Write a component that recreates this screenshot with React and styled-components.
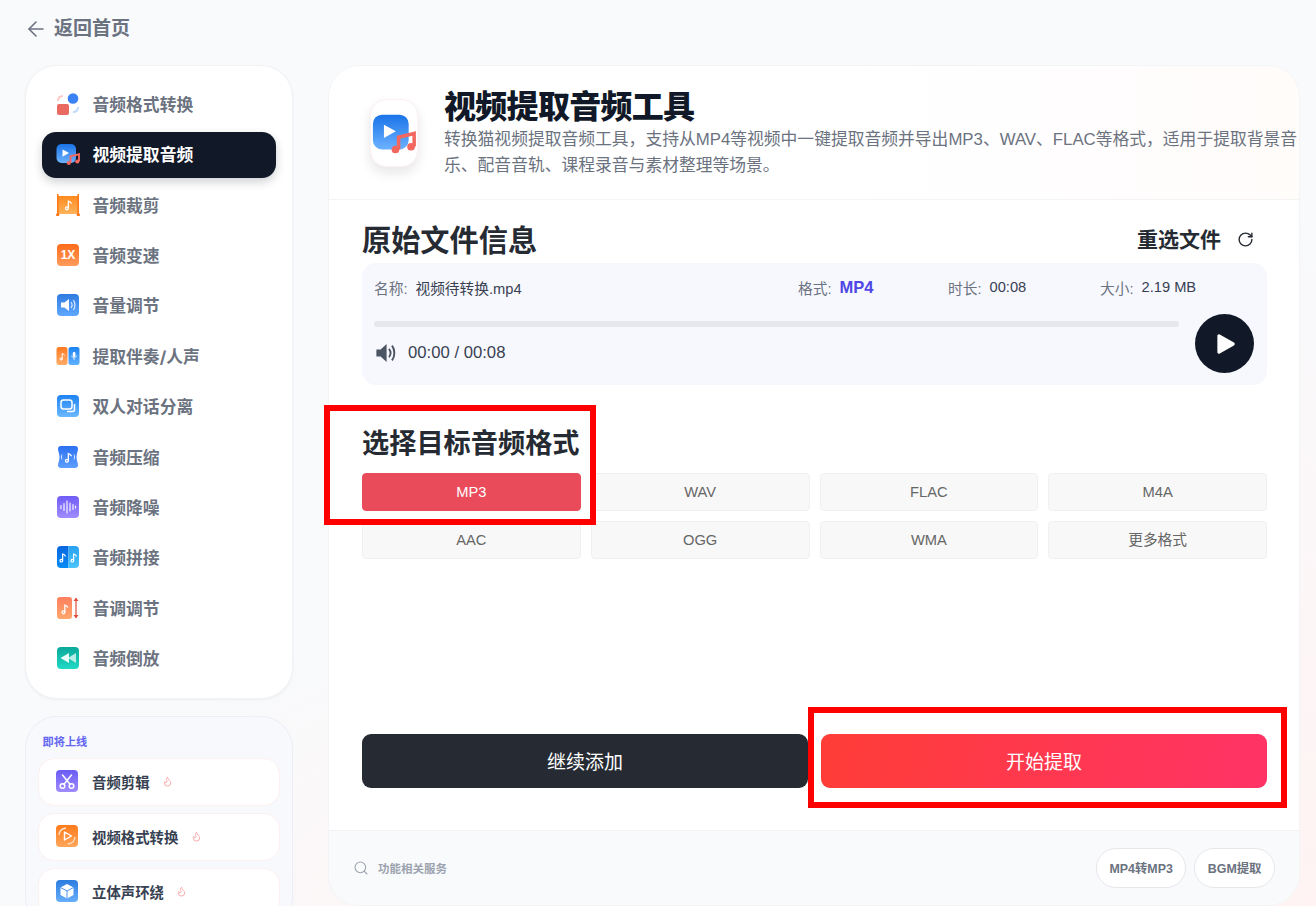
import React from 'react';
import styled, { createGlobalStyle } from 'styled-components';
import { ArrowLeft, RotateCw, Search, Flame } from 'lucide-react';

const Global = createGlobalStyle`
  html, body { margin: 0; padding: 0; height: 906px; overflow: hidden; }
  body { font-family: "Liberation Sans", "Noto Sans CJK SC", sans-serif; background: #f8fafc; }
  * { box-sizing: border-box; }
`;

const Page = styled.div`
  position: relative;
  height: 906px;
  overflow: hidden;
  background:
    radial-gradient(circle at 100% 100%, #fff3f3 0, rgba(255,243,243,0) 45%),
    radial-gradient(circle at 30% 100%, #fdf6f6 0, rgba(253,246,246,0) 22%),
    #f8fafc;
`;
const BackRow = styled.div`
  height: 65px;
  padding: 0 0 8px 24px;
  display: flex;
  align-items: center;
  gap: 6px;
  color: #6b7280;
  font: 700 19px/24px "Inter", "Noto Sans CJK SC", sans-serif;
`;
const Shell = styled.div`
  display: flex;
  align-items: flex-start;
  gap: 35px;
  padding-left: 25px;
`;
const SideColumn = styled.aside`
  width: 268px;
  flex: none;
  display: flex;
  flex-direction: column;
  gap: 17px;
`;
const NavCard = styled.nav`
  background: #fff;
  border: 1px solid #f1f3f6;
  border-radius: 32px;
  padding: 16px;
  display: flex;
  flex-direction: column;
  gap: 4.36px;
  box-shadow: 0 1px 3px rgba(15, 23, 42, .05);
`;
const NavItem = styled.div`
  height: 46px;
  display: flex;
  align-items: center;
  gap: 12.5px;
  padding: 0 0 2px 14px;
  border-radius: 14px;
  font: 700 16.8px "Inter", "Noto Sans CJK SC", sans-serif;
  color: ${p => (p.$active ? '#fff' : '#6b7280')};
  background: ${p => (p.$active ? '#111827' : 'transparent')};
  box-shadow: ${p => (p.$active ? '0 4px 10px rgba(17,24,39,.2)' : 'none')};
  & > svg { flex: none; }
`;
const SoonCard = styled.section`
  background: #f8f9fd;
  border: 1px solid #eceef6;
  border-radius: 32px;
  padding: 17px 12px 12px;
  display: flex;
  flex-direction: column;
  gap: 7.5px;
`;
const SoonLabel = styled.div`
  font: 700 11.2px/16px "Inter", "Noto Sans CJK SC", sans-serif;
  color: #6366f1;
  padding-left: 4.5px;
  margin-bottom: 1px;
`;
const SoonItem = styled.div`
  height: 47.5px;
  background: #fff;
  border: 1px solid #fdf0f0;
  border-radius: 16px;
  display: flex;
  align-items: center;
  padding: 0 0 1.5px 16px;
  font: 600 14.4px "Inter", "Noto Sans CJK SC", sans-serif;
  color: #374151;
  & > svg:first-child { flex: none; margin-right: 13px; }
`;
const Hot = styled.span`
  display: inline-flex;
  margin-left: 12.5px;
  color: #fca5a5;
`;
const Main = styled.main`
  width: 972px;
  height: 841px;
  flex: none;
  background: #fff;
  border: 1px solid #f3f4f6;
  border-radius: 32px;
  overflow: hidden;
  display: flex;
  flex-direction: column;
`;
const Header = styled.header`
  height: 134px;
  flex: none;
  display: flex;
  align-items: center;
  gap: 26px;
  padding-left: 41px;
  border-bottom: 1px solid #f3f4f6;
  background: linear-gradient(90deg, #fff 55%, #fffdfd 80%, #fffcfa 100%);
`;
const AppTile = styled.div`
  width: 48px;
  height: 68px;
  flex: none;
  background: #fff;
  border: 1px solid #fdf0f0;
  border-radius: 16px;
  box-shadow: 0 6px 12px rgba(17, 24, 39, .1);
  display: flex;
  align-items: center;
  justify-content: center;
`;
const HeaderText = styled.div`
  flex: 1;
  min-width: 0;
`;
const Title = styled.h1`
  margin: 1px 0 0;
  font: 800 32px/40px "Inter", "Noto Sans CJK SC", sans-serif;
  letter-spacing: -.7px;
  color: #111827;
`;
const Desc = styled.p`
  margin: 0;
  font-size: 16.8px;
  line-height: 26px;
  color: #6b7280;
`;
const Body = styled.div`
  flex: 1;
  padding: 18px 32px 0 33px;
  display: flex;
  flex-direction: column;
`;
const SectionHead = styled.div`
  height: 45px;
  padding: 0 13px 6px 0;
  display: flex;
  align-items: center;
  justify-content: space-between;
`;
const H2 = styled.h2`
  margin: 0;
  font-weight: 700;
  font-size: ${p => p.$size}px;
  color: #262b33;
`;
const Reselect = styled.div`
  display: flex;
  align-items: center;
  gap: 16px;
  font-size: 21px;
  font-weight: 700;
  color: #262b33;
`;
const ReselectIcon = styled(RotateCw)`
  margin-top: 4px;
  color: #262b33;
`;
const FilePanel = styled.div`
  height: 122px;
  background: #f7f8fe;
  border-radius: 14px;
  padding: 11px 13px 0 12px;
  position: relative;
`;
const Meta = styled.div`
  display: grid;
  grid-template-columns: 424px 150px 152px 1fr;
  height: 26px;
  align-items: center;
  font-size: 14.7px;
  color: #374151;
`;
const MetaCell = styled.div`
  display: flex;
  align-items: center;
  gap: 8px;
`;
const MetaKey = styled.span`
  color: #6b7280;
`;
const FormatValue = styled.span`
  color: #4f46e5;
  font-weight: 700;
  font-size: 16.5px;
`;
const Track = styled.div`
  width: 805px;
  height: 6px;
  margin-top: 21px;
  background: #e5e7eb;
  border-radius: 3px;
`;
const TimeRow = styled.div`
  display: flex;
  align-items: center;
  gap: 10px;
  margin-top: 14px;
  height: 24px;
  font-size: 16.7px;
  color: #374151;
`;
const PlayButton = styled.div`
  position: absolute;
  right: 13px;
  top: 51px;
  width: 59px;
  height: 59px;
  border-radius: 50%;
  background: #111827;
  display: flex;
  align-items: center;
  justify-content: center;
`;
const FormatHead = styled.div`
  margin-top: 38px;
  height: 36px;
  display: flex;
  align-items: center;
`;
const FormatGrid = styled.div`
  margin-top: 14px;
  display: grid;
  grid-template-columns: repeat(4, 1fr);
  gap: 10px;
`;
const FormatOption = styled.div`
  height: 38px;
  display: flex;
  align-items: center;
  justify-content: center;
  border-radius: 4px;
  font-size: 14.7px;
  line-height: 1;
  border: 1px solid ${p => (p.$on ? '#e94b5b' : '#f0f0f0')};
  background: ${p => (p.$on ? '#e94b5b' : '#f8f8f8')};
  color: ${p => (p.$on ? '#fff' : '#666')};
`;
const Actions = styled.div`
  margin-top: auto;
  margin-bottom: 42px;
  display: flex;
  justify-content: space-between;
`;
const ActionButton = styled.div`
  width: 446px;
  height: 54px;
  padding-bottom: 1px;
  border-radius: 9px;
  display: flex;
  align-items: center;
  justify-content: center;
  color: #fff;
  font-size: 19px;
  background: ${p => (p.$primary ? 'linear-gradient(100deg, #ff3d37, #ff3366)' : '#262b33')};
`;
const Footer = styled.footer`
  height: 75px;
  flex: none;
  display: flex;
  align-items: center;
  justify-content: space-between;
  padding: 0 24px;
  background: #f8fafc;
  border-top: 1px solid #f0f2f5;
`;
const FooterLabel = styled.div`
  display: flex;
  align-items: center;
  gap: 9px;
  color: #9ca3af;
  font-size: 11.5px;
  font-weight: 700;
`;
const Pills = styled.div`
  display: flex;
  gap: 8px;
`;
const Pill = styled.div`
  height: 40px;
  padding: 0 12.5px;
  display: flex;
  align-items: center;
  background: #fff;
  border: 1px solid #e5e7eb;
  border-radius: 20px;
  color: #6b7280;
  font-size: 12.4px;
  font-weight: 700;
`;
const Annotation = styled.div`
  position: absolute;
  border: 6px solid #ff0000;
  left: ${p => p.$x}px;
  top: ${p => p.$y}px;
  width: ${p => p.$w}px;
  height: ${p => p.$h}px;
`;

const note = (x, y, s = 1) => (
  <g transform={`translate(${x} ${y}) scale(${s})`} fill="none" stroke="#fff" strokeWidth="1" strokeLinecap="round">
    <path d="M2.200 5.500V0.400c1 .2 1.800.8 2.200 1.700" />
    <circle cx="1.100" cy="6" r="1.100" />
  </g>
);

const G = ({ id, a, b }) => (
  <linearGradient id={id} x1="0" y1="0" x2="0" y2="1">
    <stop offset="0" stopColor={a} />
    <stop offset="1" stopColor={b} />
  </linearGradient>
);

const Ico = ({ children }) => (
  <svg width="24" height="24" viewBox="0 0 24 24">{children}</svg>
);

const Tile = ({ id, a, b, children }) => (
  <Ico>
    <defs><G id={id} a={a} b={b} /></defs>
    <rect x="1" y="1" width="22" height="22" rx="4" fill={`url(#${id})`} />
    {children}
  </Ico>
);

const ExtractGlyph = ({ uid }) => (
  <>
    <defs><G id={uid} a="#1a73e8" b="#6cb2ff" /></defs>
    <rect x="0.500" y="2" width="19.500" height="19" rx="5" fill={`url(#${uid})`} />
    <path d="M6.500 7.500l6.500 3.600-6.500 3.600z" fill="#fff" />
    <path d="M14.500 21V14.300l8.500-2v7" fill="none" stroke="#f4675f" strokeWidth="1.900" />
    <circle cx="12.800" cy="21" r="2.100" fill="#f4675f" />
    <circle cx="21.300" cy="19.500" r="2.100" fill="#f4675f" />
  </>
);

const icons = {
  convert: (
    <Ico>
      <path d="M2 9c0-3 2-5 5-5" fill="none" stroke="#fcc9c5" strokeWidth="2" />
      <path d="M22 15c0 3-2 5-5 5" fill="none" stroke="#bfd9ff" strokeWidth="2" />
      <circle cx="17" cy="6.500" r="5.300" fill="#3b82f6" />
      <rect x="1" y="12" width="12" height="11" rx="2" fill="#ea6a62" />
    </Ico>
  ),
  extract: <Ico><ExtractGlyph uid="gx1" /></Ico>,
  trim: (
    <Ico>
      <defs><G id="gt" a="#ff8a1f" b="#ffb35c" /></defs>
      <rect x="2" y="3" width="20" height="18" fill="url(#gt)" />
      <rect x="1" y="1" width="1.600" height="22" fill="#ff7a14" />
      <rect x="21.400" y="1" width="1.600" height="22" fill="#ff7a14" />
      <rect x="0" y="20.500" width="3.400" height="2.600" rx="1" fill="#ff7a14" />
      <rect x="20.600" y="20.500" width="3.400" height="2.600" rx="1" fill="#ff7a14" />
      {note(9.500, 7.500, 1.300)}
    </Ico>
  ),
  speed: (
    <Tile id="gs" a="#ff6a1a" b="#ff9d5c">
      <text x="12" y="16.300" textAnchor="middle" fontSize="12" fontWeight="700" fontFamily="Liberation Sans" fill="#fff">1X</text>
    </Tile>
  ),
  volume: (
    <Tile id="gv" a="#2f7be0" b="#60a8ff">
      <path d="M5 9.500h3.400L13 6v12l-4.600-3.500H5z" fill="#fff" />
      <path d="M15 9c1.200 1.600 1.200 4.400 0 6M17.400 7c2 2.800 2 7.200 0 10" fill="none" stroke="#dbeafe" strokeWidth="1.200" />
    </Tile>
  ),
  vocal: (
    <Ico>
      <defs><G id="gl1" a="#ff7a1f" b="#ffac6b" /><G id="gl2" a="#1a84f0" b="#60b0ff" /></defs>
      <rect x="0.500" y="3" width="11" height="18" rx="2.500" fill="url(#gl1)" />
      <rect x="12.500" y="3" width="11" height="18" rx="2.500" fill="url(#gl2)" />
      {note(4, 9, 1)}
      <rect x="16.800" y="8" width="2.600" height="5" rx="1.300" fill="#fff" />
      <path d="M15.800 11.500c0 3 4.600 3 4.600 0M18 14v2" fill="none" stroke="#fff" strokeWidth=".8" />
    </Ico>
  ),
  dialog: (
    <Tile id="gd" a="#1f83f2" b="#6bb8ff">
      <rect x="5" y="6" width="11" height="9" rx="2.500" fill="none" stroke="#fff" strokeWidth="1.500" />
      <path d="M18.500 10v5.500a2 2 0 0 1-2 2h-5.500" fill="none" stroke="#fff" strokeWidth="1.500" />
    </Tile>
  ),
  compress: (
    <Ico>
      <defs><G id="gc" a="#2a6ff0" b="#5fa0ff" /></defs>
      <path d="M5 1h14c2 0 3 1 3 3 0 2-1.500 5-1.500 8s1.500 6 1.500 8c0 2-1 3-3 3H5c-2 0-3-1-3-3 0-2 1.500-5 1.500-8S2 6 2 4c0-2 1-3 3-3z" fill="url(#gc)" />
      {note(9.500, 8, 1.300)}
      <path d="M6 9.500c-.8 1.500-.8 3.500 0 5M18 9.500c.8 1.500.8 3.500 0 5" fill="none" stroke="#dbeafe" strokeWidth="1" />
    </Ico>
  ),
  denoise: (
    <Tile id="gn" a="#6f5cf6" b="#a08cff">
      <path d="M5 10.500v3M8 8.500v7M11 6v12M14 8v8M17 9.500v5M19.500 11v2" stroke="#fff" strokeWidth="1.200" strokeLinecap="round" fill="none" opacity=".9" />
    </Tile>
  ),
  join: (
    <Ico>
      <defs><G id="gj1" a="#0a66e0" b="#0a8cf5" /><G id="gj2" a="#28a0f0" b="#4cc4fa" /></defs>
      <path d="M5 1h7.500v22H5a4 4 0 0 1-4-4V5a4 4 0 0 1 4-4z" fill="url(#gj1)" />
      <path d="M12.500 1H19a4 4 0 0 1 4 4v14a4 4 0 0 1-4 4h-6.500z" fill="url(#gj2)" />
      {note(4, 8.500, 1.200)}
      {note(15, 8.500, 1.200)}
    </Ico>
  ),
  pitch: (
    <Ico>
      <defs><G id="gp" a="#ff7f5f" b="#ffa76b" /></defs>
      <rect x="1" y="1" width="15" height="22" rx="3" fill="url(#gp)" />
      {note(6, 8.500, 1.300)}
      <path d="M20 2.500v19" stroke="#d9503f" strokeWidth="1.200" />
      <path d="M17.500 5L20 1.500 22.500 5zM17.500 19l2.500 3.500 2.500-3.500z" fill="#d9503f" />
    </Ico>
  ),
  reverse: (
    <Tile id="gr" a="#0aa89a" b="#20d9c4">
      <path d="M13 7v10L4.500 12z" fill="#e8fdf9" />
      <path d="M20 7v10l-8-5z" fill="#fff" opacity=".7" />
    </Tile>
  ),
  scissors: (
    <Tile id="gcut" a="#6a5cf5" b="#a08cff">
      <g fill="none" stroke="#fff" strokeWidth="1.500" strokeLinecap="round">
        <circle cx="7.500" cy="17" r="2.300" />
        <circle cx="16.500" cy="17" r="2.300" />
        <path d="M9 15.300L16.500 6M15 15.300L7.500 6" />
      </g>
    </Tile>
  ),
  videoConv: (
    <Tile id="gvc" a="#ff7a1a" b="#ffa75c">
      <path d="M9.500 8l7 4-7 4z" fill="none" stroke="#fff" strokeWidth="1.400" strokeLinejoin="round" />
      <path d="M4 11c.3-3.500 3-6.500 7-7M20 13c-.3 3.500-3 6.500-7 7" fill="none" stroke="#ffe2c9" strokeWidth="1.300" />
    </Tile>
  ),
  cube: (
    <Tile id="gcube" a="#2b7cdf" b="#68aefc">
      <path d="M12 5l6.500 3.500v7.500L12 19.500 5.500 16V8.500z" fill="#fff" />
      <path d="M5.500 8.500L12 12l6.500-3.500M12 12v7.500" fill="none" stroke="#4e95ee" strokeWidth="1" />
    </Tile>
  ),
};

const navItems = [
  ['convert', '音频格式转换'],
  ['extract', '视频提取音频', true],
  ['trim', '音频裁剪'],
  ['speed', '音频变速'],
  ['volume', '音量调节'],
  ['vocal', '提取伴奏/人声'],
  ['dialog', '双人对话分离'],
  ['compress', '音频压缩'],
  ['denoise', '音频降噪'],
  ['join', '音频拼接'],
  ['pitch', '音调调节'],
  ['reverse', '音频倒放'],
];
const soonItems = [
  ['scissors', '音频剪辑'],
  ['videoConv', '视频格式转换'],
  ['cube', '立体声环绕'],
];
const formats = ['MP3', 'WAV', 'FLAC', 'M4A', 'AAC', 'OGG', 'WMA', '更多格式'];

export default function App() {
  return (
    <Page>
      <Global />
      <BackRow>
        <ArrowLeft size={24} strokeWidth={1.6} />
        <span>返回首页</span>
      </BackRow>
      <Shell>
        <SideColumn>
          <NavCard>
            {navItems.map(([k, label, active]) => (
              <NavItem key={k} $active={active}>{icons[k]}{label}</NavItem>
            ))}
          </NavCard>
          <SoonCard>
            <SoonLabel>即将上线</SoonLabel>
            {soonItems.map(([k, label]) => (
              <SoonItem key={k}>
                {icons[k]}
                {label}
                <Hot><Flame size={11} strokeWidth={2} /></Hot>
              </SoonItem>
            ))}
          </SoonCard>
        </SideColumn>
        <Main>
          <Header>
            <AppTile>
              <svg width="44" height="44" viewBox="0 0 24 24"><ExtractGlyph uid="gx2" /></svg>
            </AppTile>
            <HeaderText>
              <Title>视频提取音频工具</Title>
              <Desc>转换猫视频提取音频工具，支持从MP4等视频中一键提取音频并导出MP3、WAV、FLAC等格式，适用于提取背景音乐、配音音轨、课程录音与素材整理等场景。</Desc>
            </HeaderText>
          </Header>
          <Body>
            <SectionHead>
              <H2 $size={29.2}>原始文件信息</H2>
              <Reselect>重选文件<ReselectIcon size={17} strokeWidth={2} /></Reselect>
            </SectionHead>
            <FilePanel>
              <Meta>
                <MetaCell><MetaKey>名称:</MetaKey>视频待转换.mp4</MetaCell>
                <MetaCell><MetaKey>格式:</MetaKey><FormatValue>MP4</FormatValue></MetaCell>
                <MetaCell><MetaKey>时长:</MetaKey>00:08</MetaCell>
                <MetaCell><MetaKey>大小:</MetaKey>2.19 MB</MetaCell>
              </Meta>
              <Track />
              <TimeRow>
                <svg width="24" height="24" viewBox="0 0 20 20">
                  <path d="M2 7h3.500L10.500 2.500v15L5.500 13H2z" fill="#4b5563" />
                  <path d="M12.500 6.500c1.500 2 1.500 5 0 7" fill="none" stroke="#4b5563" strokeWidth="1.600" />
                  <path d="M15 3.800c2.600 3.400 2.600 9 0 12.400" fill="none" stroke="#4b5563" strokeWidth="1.600" />
                </svg>
                00:00 / 00:08
              </TimeRow>
              <PlayButton>
                <svg width="24" height="24" viewBox="0 0 22 22">
                  <path d="M4 3.500a1.500 1.500 0 0 1 2.200-1.300l13 7.500a1.500 1.500 0 0 1 0 2.600l-13 7.500A1.500 1.500 0 0 1 4 18.500z" fill="#fff" />
                </svg>
              </PlayButton>
            </FilePanel>
            <FormatHead><H2 $size={27.2}>选择目标音频格式</H2></FormatHead>
            <FormatGrid>
              {formats.map((f, i) => <FormatOption key={f} $on={i === 0}>{f}</FormatOption>)}
            </FormatGrid>
            <Actions>
              <ActionButton>继续添加</ActionButton>
              <ActionButton $primary>开始提取</ActionButton>
            </Actions>
          </Body>
          <Footer>
            <FooterLabel><Search size={16} strokeWidth={1.6} />功能相关服务</FooterLabel>
            <Pills>
              <Pill>MP4转MP3</Pill>
              <Pill>BGM提取</Pill>
            </Pills>
          </Footer>
        </Main>
      </Shell>
      <Annotation $x={324} $y={405} $w={272} $h={120} />
      <Annotation $x={808} $y={707} $w={479} $h={101} />
    </Page>
  );
}
